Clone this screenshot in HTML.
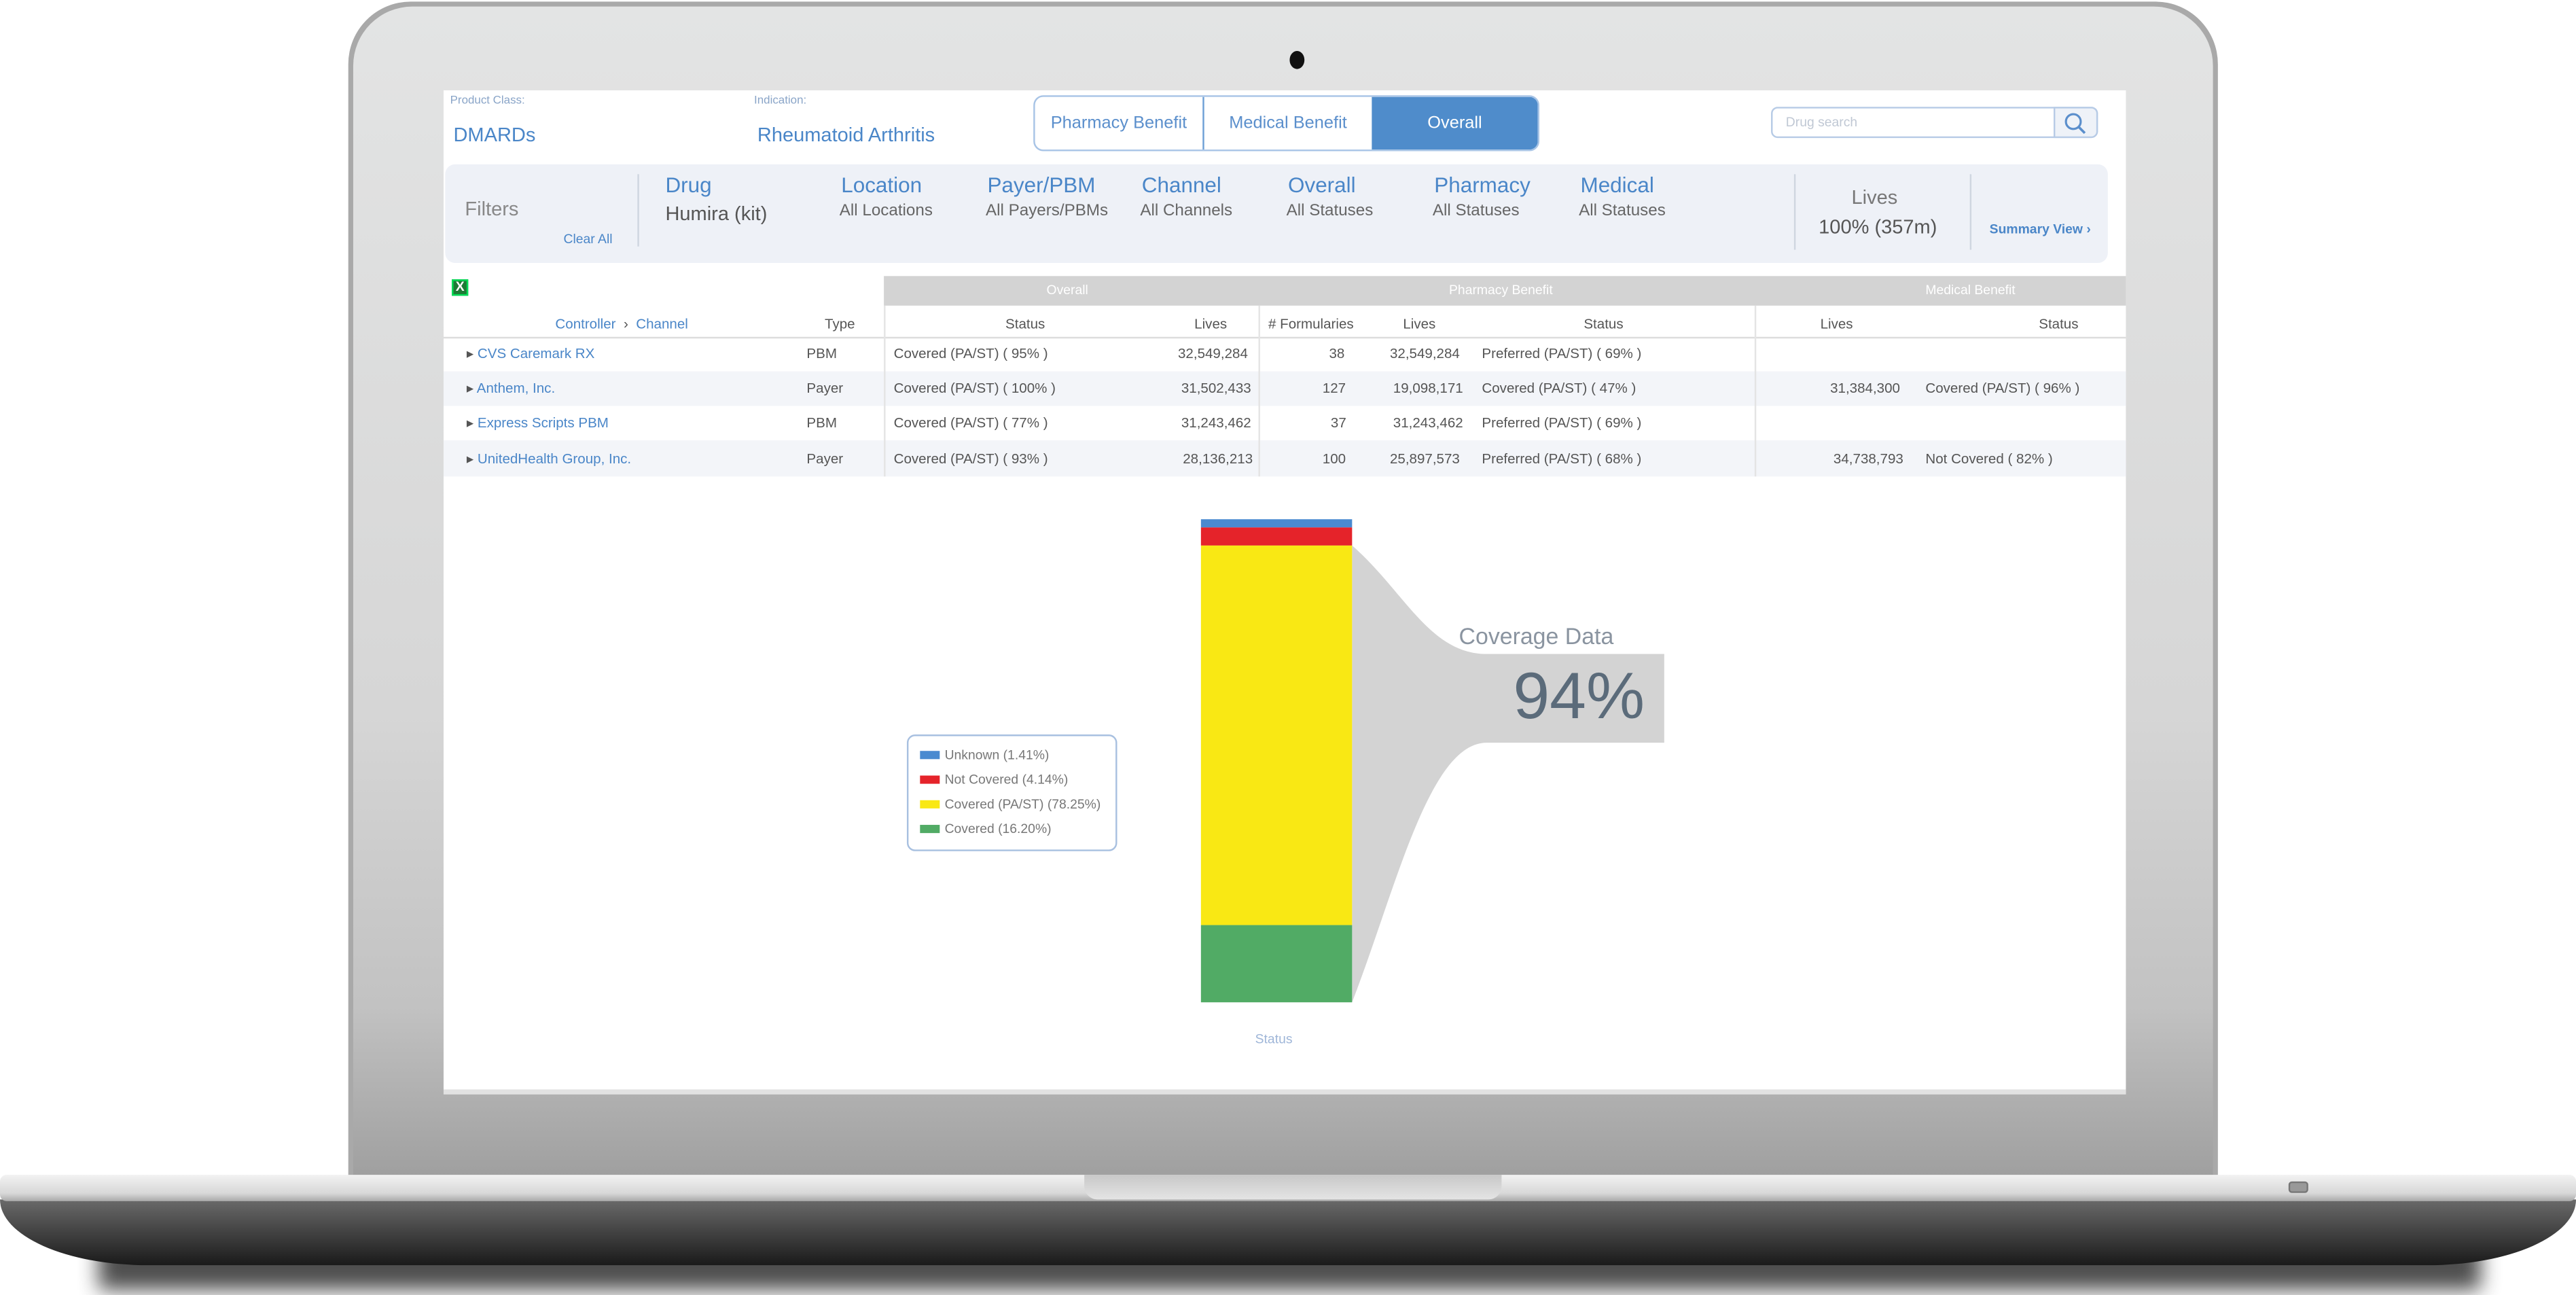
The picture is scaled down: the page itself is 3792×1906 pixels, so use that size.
<!DOCTYPE html>
<html><head><meta charset="utf-8"><style>
*{margin:0;padding:0;box-sizing:border-box}
html,body{width:3792px;height:1906px;overflow:hidden;background:#fff}
#s{position:absolute;left:0;top:0;width:1568px;height:788px;transform:scale(2.4184);transform-origin:0 0;font-family:"Liberation Sans",sans-serif}
.a{position:absolute;white-space:nowrap}
.b{color:#4a86c8}
.g{color:#666}
</style></head><body><div id="s">
<!-- lid -->
<div class="a" style="left:212px;top:1px;width:1138px;height:720px;border-radius:38px 38px 0 0;background:#a9a9a9"></div>
<div class="a" style="left:215px;top:4px;width:1132px;height:716px;border-radius:36px 36px 0 0;background:linear-gradient(180deg,#e3e4e4 0%,#d6d6d6 60%,#c2c2c2 85%,#9e9e9e 100%)"></div>
<div class="a" style="left:785px;top:31px;width:9px;height:11px;border-radius:50%;background:#111"></div>
<!-- screen -->
<div class="a" style="left:270px;top:55px;width:1024px;height:611px;background:#fff;border-bottom:3px solid #e2e2e2"></div>
<!-- base -->
<div class="a" style="left:60px;top:755px;width:1450px;height:30px;background:#222;filter:blur(6px);opacity:.8"></div>
<div class="a" style="left:0;top:730px;width:1568px;height:40px;border-radius:0 0 90px 90px/0 0 40px 40px;background:linear-gradient(180deg,#6a6a6a,#2a2a2a 80%,#1a1a1a)"></div>
<div class="a" style="left:0;top:715px;width:1568px;height:16px;border-radius:4px;background:linear-gradient(180deg,#f2f2f2,#d8d8d8 70%,#aaa)"></div>
<div class="a" style="left:660px;top:715px;width:254px;height:15px;border-radius:0 0 8px 8px;background:linear-gradient(180deg,#c8c8c8,#e4e4e4)"></div>
<div class="a" style="left:1393px;top:719px;width:12px;height:7px;border-radius:2px;background:#999;border:1px solid #777"></div>

<!-- header -->
<div class="a" style="left:274px;top:58px;font-size:7px;color:#8aa5c8">Product Class:</div>
<div class="a b" style="left:276px;top:75px;font-size:12px">DMARDs</div>
<div class="a" style="left:459px;top:58px;font-size:7px;color:#8aa5c8">Indication:</div>
<div class="a b" style="left:461px;top:75px;font-size:12px">Rheumatoid Arthritis</div>
<div class="a" style="left:629px;top:58px;width:308px;height:34px;border:1px solid #a8c4e6;border-radius:6px;overflow:hidden;display:flex;font-size:10.5px">
<div style="width:103px;border-right:1px solid #6d9fd6;color:#5b8fcc;text-align:center;line-height:32px">Pharmacy Benefit</div>
<div style="width:102px;color:#5b8fcc;text-align:center;line-height:32px">Medical Benefit</div>
<div style="flex:1;background:#4f8ccb;color:#fff;text-align:center;line-height:32px">Overall</div></div>
<div class="a" style="left:1078px;top:65px;width:199px;height:19px;border:1px solid #b7cbe6;border-radius:4px"></div>
<div class="a" style="left:1087px;top:70px;font-size:8px;color:#c0c8d4">Drug search</div>
<div class="a" style="left:1250px;top:65px;width:27px;height:19px;border:1px solid #b7cbe6;border-radius:0 4px 4px 0;background:#eef2f8"></div>
<svg class="a" style="left:1255px;top:67px" width="16" height="16"><circle cx="7" cy="7" r="4.5" fill="none" stroke="#5b8fcc" stroke-width="1.3"/><line x1="10.3" y1="10.3" x2="14" y2="14" stroke="#5b8fcc" stroke-width="1.5"/></svg>

<!-- filters -->
<div class="a" style="left:271px;top:100px;width:1012px;height:60px;background:#eef1f7;border-radius:6px"></div>
<div class="a g" style="left:283px;top:120px;font-size:12px;color:#888">Filters</div>
<div class="a b" style="left:343px;top:141px;font-size:8px">Clear All</div>
<div class="a" style="left:388px;top:106px;width:1px;height:44px;background:#cfd6e0"></div>
<div class="a b" style="left:405px;top:105px;font-size:13px">Drug</div>
<div class="a" style="left:405px;top:123px;font-size:12px;color:#555">Humira (kit)</div>
<div class="a b" style="left:512px;top:105px;font-size:13px">Location</div><div class="a g" style="left:511px;top:123px;font-size:10px">All Locations</div>
<div class="a b" style="left:601px;top:105px;font-size:13px">Payer/PBM</div><div class="a g" style="left:600px;top:123px;font-size:10px">All Payers/PBMs</div>
<div class="a b" style="left:695px;top:105px;font-size:13px">Channel</div><div class="a g" style="left:694px;top:123px;font-size:10px">All Channels</div>
<div class="a b" style="left:784px;top:105px;font-size:13px">Overall</div><div class="a g" style="left:783px;top:123px;font-size:10px">All Statuses</div>
<div class="a b" style="left:873px;top:105px;font-size:13px">Pharmacy</div><div class="a g" style="left:872px;top:123px;font-size:10px">All Statuses</div>
<div class="a b" style="left:962px;top:105px;font-size:13px">Medical</div><div class="a g" style="left:961px;top:123px;font-size:10px">All Statuses</div>
<div class="a" style="left:1092px;top:106px;width:1px;height:46px;background:#cfd6e0"></div>
<div class="a" style="left:1127px;top:113px;font-size:12px;color:#777">Lives</div>
<div class="a" style="left:1107px;top:131px;font-size:12px;color:#555">100% (357m)</div>
<div class="a" style="left:1199px;top:106px;width:1px;height:46px;background:#cfd6e0"></div>
<div class="a b" style="left:1211px;top:135px;font-size:8px;font-weight:bold">Summary View ›</div>

<!-- table -->
<div class="a" style="left:275px;top:170px;width:10px;height:10px;background:#1e7a35;border:1px solid #0d5;color:#fff;font-size:8px;line-height:8px;text-align:center;font-weight:bold">X</div>
<div class="a" style="left:538px;top:168px;width:756px;height:18px;background:#d3d3d3"></div>
<div class="a" style="left:637px;top:172px;font-size:8px;color:#fff">Overall</div>
<div class="a" style="left:882px;top:172px;font-size:8px;color:#fff">Pharmacy Benefit</div>
<div class="a" style="left:1172px;top:172px;font-size:8px;color:#fff">Medical Benefit</div>
<div class="a" style="left:270px;top:205px;width:1024px;height:1px;background:#ddd"></div>
<div class="a" style="left:270px;top:226px;width:1024px;height:21px;background:#f3f5f9"></div>
<div class="a" style="left:270px;top:268px;width:1024px;height:22px;background:#f3f5f9"></div>
<div class="a" style="left:538px;top:186px;width:1px;height:104px;background:#e4e4e4"></div>
<div class="a" style="left:766px;top:186px;width:1px;height:104px;background:#e4e4e4"></div>
<div class="a" style="left:1068px;top:186px;width:1px;height:104px;background:#e4e4e4"></div>
<div style="font-size:8.5px;color:#555">
<div class="a b" style="left:338px;top:192px">Controller &nbsp;<span style="color:#555">›</span>&nbsp; Channel</div>
<div class="a" style="left:502px;top:192px">Type</div>
<div class="a" style="left:612px;top:192px">Status</div>
<div class="a" style="left:727px;top:192px">Lives</div>
<div class="a" style="left:772px;top:192px"># Formularies</div>
<div class="a" style="left:854px;top:192px">Lives</div>
<div class="a" style="left:964px;top:192px">Status</div>
<div class="a" style="left:1108px;top:192px">Lives</div>
<div class="a" style="left:1241px;top:192px">Status</div>
</div>
<div style="font-size:8.5px;color:#555">
<div class="a" style="left:284px;top:210px">▸ <span class="b">CVS Caremark RX</span></div><div class="a" style="left:491px;top:210px">PBM</div><div class="a" style="left:544px;top:210px">Covered (PA/ST) ( 95% )</div><div class="a" style="left:717px;top:210px">32,549,284</div><div class="a" style="left:809px;top:210px">38</div><div class="a" style="left:846px;top:210px">32,549,284</div><div class="a" style="left:902px;top:210px">Preferred (PA/ST) ( 69% )</div>
<div class="a" style="left:284px;top:231px">▸ <span class="b">Anthem, Inc.</span></div><div class="a" style="left:491px;top:231px">Payer</div><div class="a" style="left:544px;top:231px">Covered (PA/ST) ( 100% )</div><div class="a" style="left:719px;top:231px">31,502,433</div><div class="a" style="left:805px;top:231px">127</div><div class="a" style="left:848px;top:231px">19,098,171</div><div class="a" style="left:902px;top:231px">Covered (PA/ST) ( 47% )</div><div class="a" style="left:1114px;top:231px">31,384,300</div><div class="a" style="left:1172px;top:231px">Covered (PA/ST) ( 96% )</div>
<div class="a" style="left:284px;top:252px">▸ <span class="b">Express Scripts PBM</span></div><div class="a" style="left:491px;top:252px">PBM</div><div class="a" style="left:544px;top:252px">Covered (PA/ST) ( 77% )</div><div class="a" style="left:719px;top:252px">31,243,462</div><div class="a" style="left:810px;top:252px">37</div><div class="a" style="left:848px;top:252px">31,243,462</div><div class="a" style="left:902px;top:252px">Preferred (PA/ST) ( 69% )</div>
<div class="a" style="left:284px;top:274px">▸ <span class="b">UnitedHealth Group, Inc.</span></div><div class="a" style="left:491px;top:274px">Payer</div><div class="a" style="left:544px;top:274px">Covered (PA/ST) ( 93% )</div><div class="a" style="left:720px;top:274px">28,136,213</div><div class="a" style="left:805px;top:274px">100</div><div class="a" style="left:846px;top:274px">25,897,573</div><div class="a" style="left:902px;top:274px">Preferred (PA/ST) ( 68% )</div><div class="a" style="left:1116px;top:274px">34,738,793</div><div class="a" style="left:1172px;top:274px">Not Covered ( 82% )</div>
</div>

<!-- chart -->
<svg class="a" style="left:0;top:0" width="1568" height="788">
<path d="M823 332 C855 360 870 398 905 398 L1013 398 L1013 452 L905 452 C870 452 850 540 823 610 Z" fill="#d3d3d3"/>
<rect x="731" y="316" width="92" height="5" fill="#4a8ad0"/>
<rect x="731" y="321" width="92" height="11" fill="#e5232a"/>
<rect x="731" y="332" width="92" height="231" fill="#f9e814"/>
<rect x="731" y="563" width="92" height="47" fill="#51ab65"/>
</svg>
<div class="a" style="left:888px;top:379px;font-size:14px;color:#8a94a0">Coverage Data</div>
<div class="a" style="left:921px;top:402px;font-size:40px;color:#5b6b7a">94%</div>
<div class="a" style="left:552px;top:447px;width:128px;height:71px;border:1px solid #a8c0e0;border-radius:5px"></div>
<div style="font-size:8px;color:#777">
<div class="a" style="left:560px;top:457px;width:12px;height:5px;background:#4a8ad0"></div><div class="a" style="left:575px;top:455px">Unknown (1.41%)</div>
<div class="a" style="left:560px;top:472px;width:12px;height:5px;background:#e5232a"></div><div class="a" style="left:575px;top:470px">Not Covered (4.14%)</div>
<div class="a" style="left:560px;top:487px;width:12px;height:5px;background:#f9e814"></div><div class="a" style="left:575px;top:485px">Covered (PA/ST) (78.25%)</div>
<div class="a" style="left:560px;top:502px;width:12px;height:5px;background:#51ab65"></div><div class="a" style="left:575px;top:500px">Covered (16.20%)</div>
</div>
<div class="a" style="left:764px;top:628px;font-size:8px;color:#9fb6d8">Status</div>
</div></body></html>
